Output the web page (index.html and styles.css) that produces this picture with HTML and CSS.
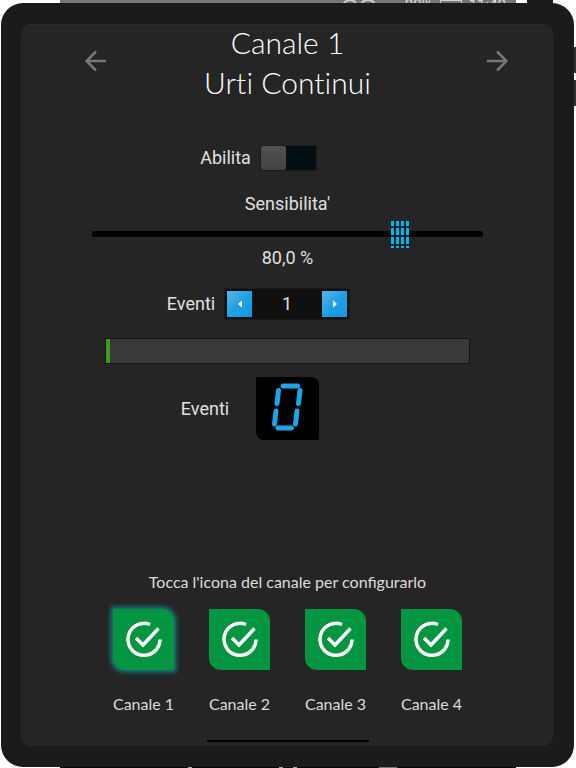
FILE: index.html
```
<!DOCTYPE html>
<html lang="it">
<head>
    <meta charset="UTF-8">
    <meta name="viewport" content="width=device-width, initial-scale=1.0">
    <title>Canale 1 - Urti Continui</title>
    <link rel="stylesheet" href="styles.css">
</head>
<body>
    <!-- Status bar, mostly hidden behind the device -->
    <div class="status-bar">
        <svg width="36" height="16" viewBox="0 0 36 16" fill="none" stroke="#d0d0d0" stroke-width="2" aria-hidden="true">
            <circle cx="8" cy="7" r="7"/>
            <circle cx="26" cy="8" r="8"/>
            <circle cx="8" cy="7" r="3"/>
        </svg>
        <span>80%</span>
        <span class="battery-icon"></span>
        <span>11:40</span>
    </div>

    <div class="device">
        <span class="device-camera"></span>
        <span class="device-key volume"></span>
        <span class="device-key power"></span>

        <main class="screen">
            <header class="header">
                <button class="arrow prev" type="button" aria-label="Canale precedente">
                    <svg width="22" height="22" viewBox="0 0 22 22"><path d="M21 11H2M11 1.5L1.5 11L11 20.5"/></svg>
                </button>
                <h1>Canale 1<br>Urti Continui</h1>
                <button class="arrow next" type="button" aria-label="Canale successivo">
                    <svg width="22" height="22" viewBox="0 0 22 22"><path d="M1 11H20M11 1.5L20.5 11L11 20.5"/></svg>
                </button>
            </header>

            <div class="row enable">
                <label for="abilita">Abilita</label>
                <input class="switch" type="checkbox" id="abilita">
            </div>

            <div class="sensitivity">
                <label for="sensibilita">Sensibilita'</label>
                <input class="slider" type="range" id="sensibilita" min="0" max="100" value="80">
                <output for="sensibilita">80,0 %</output>
            </div>

            <div class="row events">
                <label for="eventi">Eventi</label>
                <div class="stepper">
                    <button type="button" aria-label="Diminuisci">
                        <svg width="6" height="8" viewBox="0 0 6 8"><path d="M5 0.5V7.5L1 4Z"/></svg>
                    </button>
                    <input type="text" id="eventi" value="1">
                    <button type="button" aria-label="Aumenta">
                        <svg width="6" height="8" viewBox="0 0 6 8"><path d="M1 0.5V7.5L5 4Z"/></svg>
                    </button>
                </div>
            </div>

            <progress class="level" value="1.2" max="100" aria-label="Livello"></progress>

            <div class="row counter">
                <span>Eventi</span>
                <!-- Seven segment display -->
                <svg class="display" width="63" height="63" viewBox="0 0 63 63" role="img" aria-label="0">
                    <path d="M27 9H41.5M22.5 13.5L21 26.5M44 13.5L42.5 26.5M20 34L18.5 47M41 34L39.5 47M22 51H35.5"/>
                </svg>
            </div>

            <section class="channels">
                <p>Tocca l'icona del canale per configurarlo</p>
                <div class="channel-list">
                    <button class="channel active" type="button">
                        <svg class="channel-icon" viewBox="0 0 61 61"><path d="M37 15.5A16 16 0 1 0 47 30.5M23 29L30 36L45.5 19.5"/></svg>
                        <span>Canale 1</span>
                    </button>
                    <button class="channel" type="button">
                        <svg class="channel-icon" viewBox="0 0 61 61"><path d="M37 15.5A16 16 0 1 0 47 30.5M23 29L30 36L45.5 19.5"/></svg>
                        <span>Canale 2</span>
                    </button>
                    <button class="channel" type="button">
                        <svg class="channel-icon" viewBox="0 0 61 61"><path d="M37 15.5A16 16 0 1 0 47 30.5M23 29L30 36L45.5 19.5"/></svg>
                        <span>Canale 3</span>
                    </button>
                    <button class="channel" type="button">
                        <svg class="channel-icon" viewBox="0 0 61 61"><path d="M37 15.5A16 16 0 1 0 47 30.5M23 29L30 36L45.5 19.5"/></svg>
                        <span>Canale 4</span>
                    </button>
                </div>
                <div class="home-bar"></div>
            </section>
        </main>
    </div>

    <div class="bottom-strip"></div>
</body>
</html>
```
FILE: styles.css
```
* {
    box-sizing: border-box;
}

body {
    margin: 0;
    min-height: 100vh;
    display: flex;
    flex-direction: column;
    background-color: #fff;
    color: #e0e0e0;
    font-family: Roboto, sans-serif;
    font-size: 18px;
    line-height: 24px;
}

button {
    padding: 0;
    border: 0;
    background: none;
    color: inherit;
    font: inherit;
    cursor: pointer;
}

/* Strips visible around the device */
.status-bar {
    display: flex;
    justify-content: flex-end;
    gap: 7px;
    height: 3px;
    margin: 0 60px;
    padding-right: 10px;
    overflow: hidden;
    background-color: #777;
    color: #e0e0e0;
    font-size: 15px;
    line-height: 10px;
}

.status-bar svg {
    flex: none;
    margin-right: 20px;
}

.battery-icon {
    width: 22px;
    height: 12px;
    border: 1px solid #d0d0d0;
}

.bottom-strip {
    height: 1px;
    margin: 0 60px;
    background: linear-gradient(90deg, transparent 28%, #aaa 28% 29%, transparent 29% 48%, #aaa 48% 49%, transparent 49% 51%, #aaa 51% 52%, transparent 52% 70%, #777 70% 74%, transparent 74%) #0c0608;
}

/* Device */
.device {
    position: relative;
    flex: 1;
    display: flex;
    margin: 0 2px 0 1px;
    padding: 21px 21px 21px 20px;
    border-radius: 22px;
    background-color: #1b1b1b;
}

.device-camera {
    position: absolute;
    top: -3px;
    right: 21px;
    width: 26px;
    height: 4px;
    background-color: #1b1b1b;
}

.device-key {
    position: absolute;
    right: -2px;
    width: 2px;
    height: 26px;
    background-color: #333;
}

.volume {
    top: 44px;
}

.power {
    top: 77px;
}

.screen {
    flex: 1;
    display: flex;
    flex-direction: column;
    align-items: center;
    padding-left: 1px;
    border: 1px solid #292929;
    border-radius: 10px;
    background-color: #252525;
}

.header {
    width: 100%;
    display: grid;
    grid-template-columns: 1fr auto 1fr;
    margin-bottom: 43px;
}

h1 {
    margin: -3px 0 0;
    font-family: Lato, sans-serif;
    font-size: 30px;
    font-weight: 300;
    font-variant-ligatures: none;
    line-height: 40px;
    text-align: center;
    color: #fff;
}

.arrow {
    height: 22px;
    margin-top: 25px;
}

.arrow svg {
    display: block;
    fill: none;
    stroke: #777;
    stroke-width: 2.5;
}

.prev {
    justify-self: start;
    margin-left: 62px;
}

.next {
    justify-self: end;
    margin-right: 44px;
}

.row {
    display: flex;
    align-items: center;
    gap: 9px;
    padding-right: 58px;
}

/* On/off switch */
.switch {
    appearance: none;
    width: 57px;
    height: 26px;
    margin: 0;
    border: 1px solid #1b1b1b;
    border-radius: 2px;
    background-color: #020f15;
}

.switch::before {
    content: '';
    display: block;
    width: 25px;
    height: 24px;
    border-radius: 2px;
    background: linear-gradient(#515151, #434343);
}

.switch:checked::before {
    margin-left: auto;
}

/* Sensitivity slider */
.sensitivity {
    width: 74%;
    display: flex;
    flex-direction: column;
    align-items: center;
    margin-top: 21px;
}

.slider {
    appearance: none;
    width: 100%;
    height: 28px;
    margin: 4px 0 -2px;
    background: none;
}

.slider::-webkit-slider-runnable-track {
    height: 6px;
    border-radius: 2px;
    background-color: #000;
}

.slider::-webkit-slider-thumb {
    appearance: none;
    width: 18px;
    height: 27px;
    margin-top: -10px;
    background:
        repeating-linear-gradient(90deg, transparent 0 3px, #14262d 3px 5px),
        linear-gradient(transparent 5px, #14262d 5px 7px, transparent 7px 14px, #14262d 14px 16px, transparent 16px 23px, #14262d 23px 25px, transparent 25px),
        #0db4e6;
}

/* Events stepper */
.events {
    margin-top: 18px;
}

.stepper {
    display: flex;
    padding: 2px;
    border: 1px solid #1b1b1b;
    background-color: #101010;
}

.stepper button {
    width: 25px;
    height: 26px;
    background: linear-gradient(135deg, #58b5ea, #20a0e4 50%, #1597dd);
}

.stepper svg {
    display: block;
    margin: auto;
    fill: #fff;
}

.stepper input {
    width: 70px;
    padding: 0;
    border: 0;
    background: none;
    color: #e0e0e0;
    font: inherit;
    text-align: center;
}

/* Level bar */
.level {
    appearance: none;
    width: 69%;
    height: 26px;
    margin-top: 18px;
    border: 1px solid #141414;
}

.level::-webkit-progress-bar {
    background-color: #393939;
}

.level::-webkit-progress-value {
    background-color: #3b9c22;
}

.counter {
    gap: 27px;
    margin-top: 13px;
    padding-right: 75px;
}

.display {
    border-radius: 2px 8px 2px 8px;
    background-color: #000;
    fill: none;
    stroke: #1ca5e8;
    stroke-width: 5;
    stroke-linecap: round;
}

/* Channel icons */
.channels {
    display: flex;
    flex-direction: column;
    align-items: center;
    margin-top: auto;
    font-family: Lato, sans-serif;
    font-size: 16px;
    color: #dcdcdc;
}

.channels p {
    margin: 0;
}

.channel-list {
    display: flex;
    gap: 26px;
    margin-top: 15px;
}

.channel {
    width: 70px;
    display: flex;
    flex-direction: column;
    align-items: center;
    gap: 22px;
    white-space: nowrap;
}

.channel-icon {
    width: 61px;
    height: 61px;
    border-radius: 0 12px 0 12px;
    background-color: #049540;
    fill: none;
    stroke: #fff;
    stroke-width: 3.5;
}

.active .channel-icon {
    box-shadow: 0 0 5px 2px #168390;
}

.home-bar {
    width: 162px;
    height: 2px;
    margin: 24px 0 3px;
    background-color: #000;
}
```
